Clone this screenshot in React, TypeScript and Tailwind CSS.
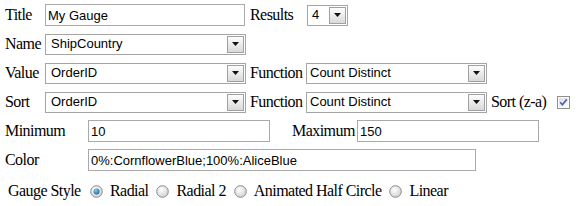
import React from 'react';

const serif = { fontFamily: '"Liberation Serif", "Times New Roman", serif' };
const sans = { fontFamily: '"Liberation Sans", Arial, sans-serif' };

function TextBox({ value, w }: { value: string; w: string }) {
  return (
    <input
      readOnly
      value={value}
      className={`${w} h-[22px] border border-[#a9a9a9] bg-white px-[2px] text-[13px] tracking-normal text-black outline-none`}
      style={sans}
    />
  );
}

function Dropdown({ value, w, pad = 'pl-[5px]' }: { value: string; w: string; pad?: string }) {
  return (
    <div className={`${w} flex h-[21px] items-stretch border border-[#a5a5a5] bg-white`}>
      <span className={`flex flex-1 items-center ${pad} text-[13px] tracking-normal text-black`} style={sans}>
        {value}
      </span>
      <div className="my-[1px] mr-[1px] flex w-[17px] items-center justify-center border border-[#a0a0a0] bg-gradient-to-b from-[#fdfdfd] to-[#d9d9d9]">
        <svg width="7" height="4" viewBox="0 0 7 4">
          <path d="M0 0h7L3.5 4z" fill="#111" />
        </svg>
      </div>
    </div>
  );
}

function Radio({ checked }: { checked?: boolean }) {
  return (
    <svg width="13" height="13" viewBox="0 0 13 13" className="shrink-0">
      <defs>
        <radialGradient id="rb" cx="40%" cy="35%" r="70%">
          <stop offset="0%" stopColor="#ffffff" />
          <stop offset="100%" stopColor="#cfcfcf" />
        </radialGradient>
        <radialGradient id="rd" cx="40%" cy="35%" r="70%">
          <stop offset="0%" stopColor="#7fd0f5" />
          <stop offset="100%" stopColor="#1a5f96" />
        </radialGradient>
      </defs>
      <circle cx="6.5" cy="6.5" r="5.8" fill="url(#rb)" stroke="#8b8b8b" strokeWidth="1" />
      {checked && <circle cx="6.5" cy="6.5" r="3" fill="url(#rd)" />}
    </svg>
  );
}

function Check() {
  return (
    <svg width="13" height="13" viewBox="0 0 13 13" className="shrink-0">
      <defs>
        <linearGradient id="cb" x1="0" y1="0" x2="1" y2="1">
          <stop offset="0%" stopColor="#dcdcdc" />
          <stop offset="100%" stopColor="#ffffff" />
        </linearGradient>
      </defs>
      <rect x="0.5" y="0.5" width="12" height="12" fill="#fff" stroke="#8e8f8f" />
      <rect x="2" y="2" width="9" height="9" fill="url(#cb)" />
      <path d="M3.2 6.3 L5.4 8.8 L9.8 3.4" fill="none" stroke="#4a5fc4" strokeWidth="1.7" />
    </svg>
  );
}

export default function App() {
  return (
    <div
      className="h-[206px] w-[576px] bg-white pl-[5px] pt-[4px] text-[16px] tracking-[-0.55px] text-black"
      style={serif}
    >
      <div className="flex flex-col gap-[7px]">
        {/* Title / Results */}
        <div className="flex h-[22px] items-center">
          <span className="w-[40px]">Title</span>
          <TextBox value="My Gauge" w="w-[200px]" />
          <span className="ml-[5px] w-[57px]">Results</span>
          <Dropdown value="4" w="w-[41px]" pad="pl-[4px]" />
        </div>

        {/* Name */}
        <div className="flex h-[22px] items-center">
          <span className="w-[40px]">Name</span>
          <Dropdown value="ShipCountry" w="w-[201px]" />
        </div>

        {/* Value */}
        <div className="flex h-[22px] items-center">
          <span className="w-[40px]">Value</span>
          <Dropdown value="OrderID" w="w-[201px]" />
          <span className="ml-[4px] w-[56px]">Function</span>
          <Dropdown value="Count Distinct" w="w-[181px]" pad="pl-[3px]" />
        </div>

        {/* Sort */}
        <div className="flex h-[22px] items-center">
          <span className="w-[40px]">Sort</span>
          <Dropdown value="OrderID" w="w-[201px]" />
          <span className="ml-[4px] w-[56px]">Function</span>
          <Dropdown value="Count Distinct" w="w-[181px]" pad="pl-[3px]" />
          <span className="ml-[4px] w-[66px]">Sort (z-a)</span>
          <Check />
        </div>

        {/* Min / Max */}
        <div className="flex h-[22px] items-center">
          <span className="w-[83px]">Minimum</span>
          <TextBox value="10" w="w-[182px]" />
          <span className="ml-[22px] w-[65px]">Maximum</span>
          <TextBox value="150" w="w-[182px]" />
        </div>

        {/* Color */}
        <div className="flex h-[22px] items-center">
          <span className="w-[83px]">Color</span>
          <TextBox value="0%:CornflowerBlue;100%:AliceBlue" w="w-[388px]" />
        </div>

        {/* Gauge style */}
        <div className="mt-[2px] flex h-[22px] items-center pl-[3px]">
          <span className="w-[82px]">Gauge Style</span>
          <Radio checked />
          <span className="ml-[7px] mr-[8px]">Radial</span>
          <Radio />
          <span className="ml-[7px] mr-[8px]">Radial 2</span>
          <Radio />
          <span className="ml-[7px] mr-[8px]">Animated Half Circle</span>
          <Radio />
          <span className="ml-[7px]">Linear</span>
        </div>
      </div>
    </div>
  );
}
